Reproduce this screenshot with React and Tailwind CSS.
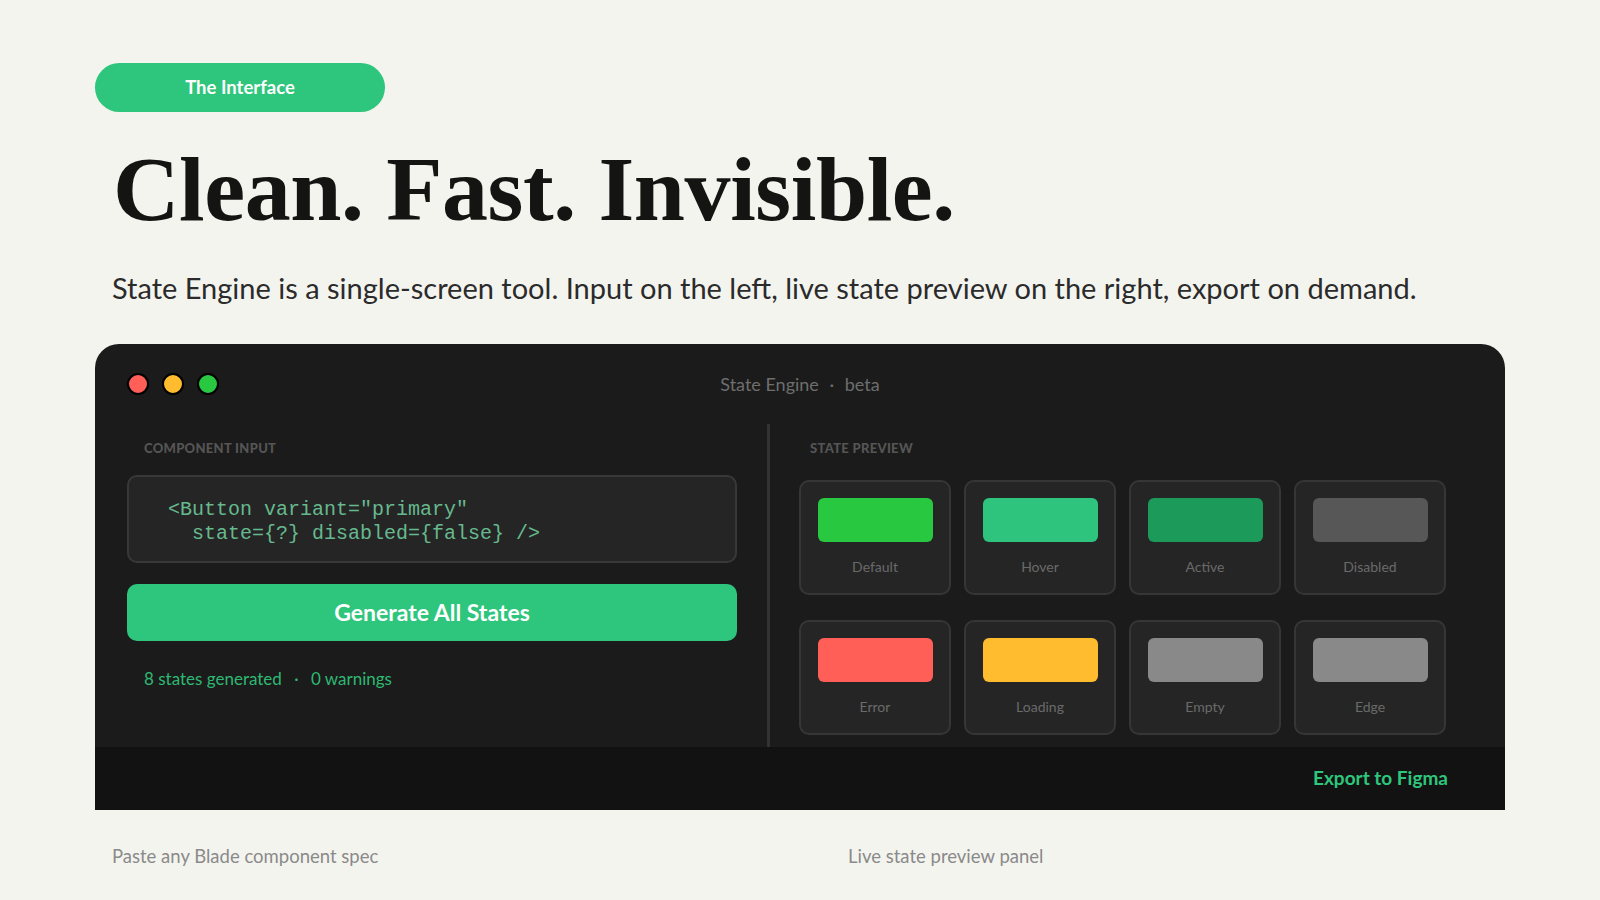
export default function App() {
  const states = [
    { label: 'Default', color: 'bg-[#28c840]' },
    { label: 'Hover', color: 'bg-[#2ec47e]' },
    { label: 'Active', color: 'bg-[#1c9a5a]' },
    { label: 'Disabled', color: 'bg-[#575757]' },
    { label: 'Error', color: 'bg-[#ff5f57]' },
    { label: 'Loading', color: 'bg-[#febc2e]' },
    { label: 'Empty', color: 'bg-[#898989]' },
    { label: 'Edge', color: 'bg-[#898989]' }
  ]

  return (
    <div className="w-[1600px] h-[900px] bg-[#f4f4ef] font-['Lato',sans-serif] overflow-hidden">
      <div className="pl-[95px] pt-[63px]">
        {/* Tag */}
        <div className="w-[290px] h-[49px] rounded-full bg-[#2ec57c] flex items-center justify-center text-white text-[18.5px] font-bold">
          The Interface
        </div>

        {/* Heading */}
        <h1 className="ml-[18px] mt-[27px] font-['Liberation_Serif',serif] font-bold text-[92px] leading-[100px] tracking-[-0.4px] text-[#141412]">
          Clean. Fast. Invisible.
        </h1>

        <p className="ml-[17px] mt-[31px] text-[29px] leading-[36px] text-[#2b2b2b]">
          State Engine is a single-screen tool. Input on the left, live state preview on the right, export on demand.
        </p>

        {/* Window */}
        <div className="mt-[38px] w-[1410px] bg-[#1b1b1b] rounded-t-[24px] overflow-hidden">
          {/* Title bar */}
          <div className="h-[80px] px-8 flex items-center relative">
            <div className="flex gap-[13px]">
              <span className="w-[22px] h-[22px] rounded-full bg-[#ff5f57] border-2 border-black" />
              <span className="w-[22px] h-[22px] rounded-full bg-[#febc2e] border-2 border-black" />
              <span className="w-[22px] h-[22px] rounded-full bg-[#28c840] border-2 border-black" />
            </div>
            <div className="absolute left-0 right-0 text-center text-[18px] text-[#6e6e6e] pointer-events-none">
              State Engine <span className="mx-1.5">·</span> beta
            </div>
          </div>

          {/* Body */}
          <div className="flex pl-8 h-[323px]">
            <div className="w-[610px] pt-4">
              <div className="pl-[17px] text-[13px] leading-4 font-black tracking-[0.3px] text-[#555]">COMPONENT INPUT</div>
              <div className="mt-[19px] h-[88px] rounded-[10px] bg-[#252525] border-2 border-[#383838] pl-[39px] pt-[21px] font-['Liberation_Mono',monospace] text-[20px] leading-[24px] text-[#66b98e] whitespace-pre">
                {'<Button variant="primary"\n  state={?} disabled={false} />'}
              </div>
              <button className="mt-[21px] w-full h-[57px] rounded-[10px] bg-[#2ec57c] text-white text-[23px] font-bold">
                Generate All States
              </button>
              <div className="mt-[25px] pl-[17px] text-[17px] text-[#2eb872]">
                8 states generated <span className="mx-2">·</span> 0 warnings
              </div>
            </div>

            <div className="ml-[30px] w-[3px] bg-[#333]" />

            <div className="pl-[29px] pt-4">
              <div className="pl-[11px] text-[13px] leading-4 font-black tracking-[0.3px] text-[#555]">STATE PREVIEW</div>
              <div className="mt-6 grid grid-cols-[repeat(4,152px)] gap-x-[13px] gap-y-[25px]">
                {states.map((s) => (
                  <div
                    key={s.label}
                    className="h-[115px] rounded-[10px] bg-[#252525] border-2 border-[#363636] flex flex-col items-center pt-4"
                  >
                    <div className={`w-[115px] h-[44px] rounded-[6px] ${s.color}`} />
                    <div className="mt-[14px] text-[14px] text-[#6a6a6a]">{s.label}</div>
                  </div>
                ))}
              </div>
            </div>
          </div>

          {/* Footer */}
          <div className="h-[63px] bg-[#121212] flex items-center justify-end pr-[57px] text-[19px] font-bold text-[#2ec57c]">
            Export to Figma
          </div>
        </div>

        <div className="flex mt-[33px] text-[18.5px] text-[#8a8a8a]">
          <div className="ml-[17px] w-[736px]">Paste any Blade component spec</div>
          <div>Live state preview panel</div>
        </div>
      </div>
    </div>
  )
}
